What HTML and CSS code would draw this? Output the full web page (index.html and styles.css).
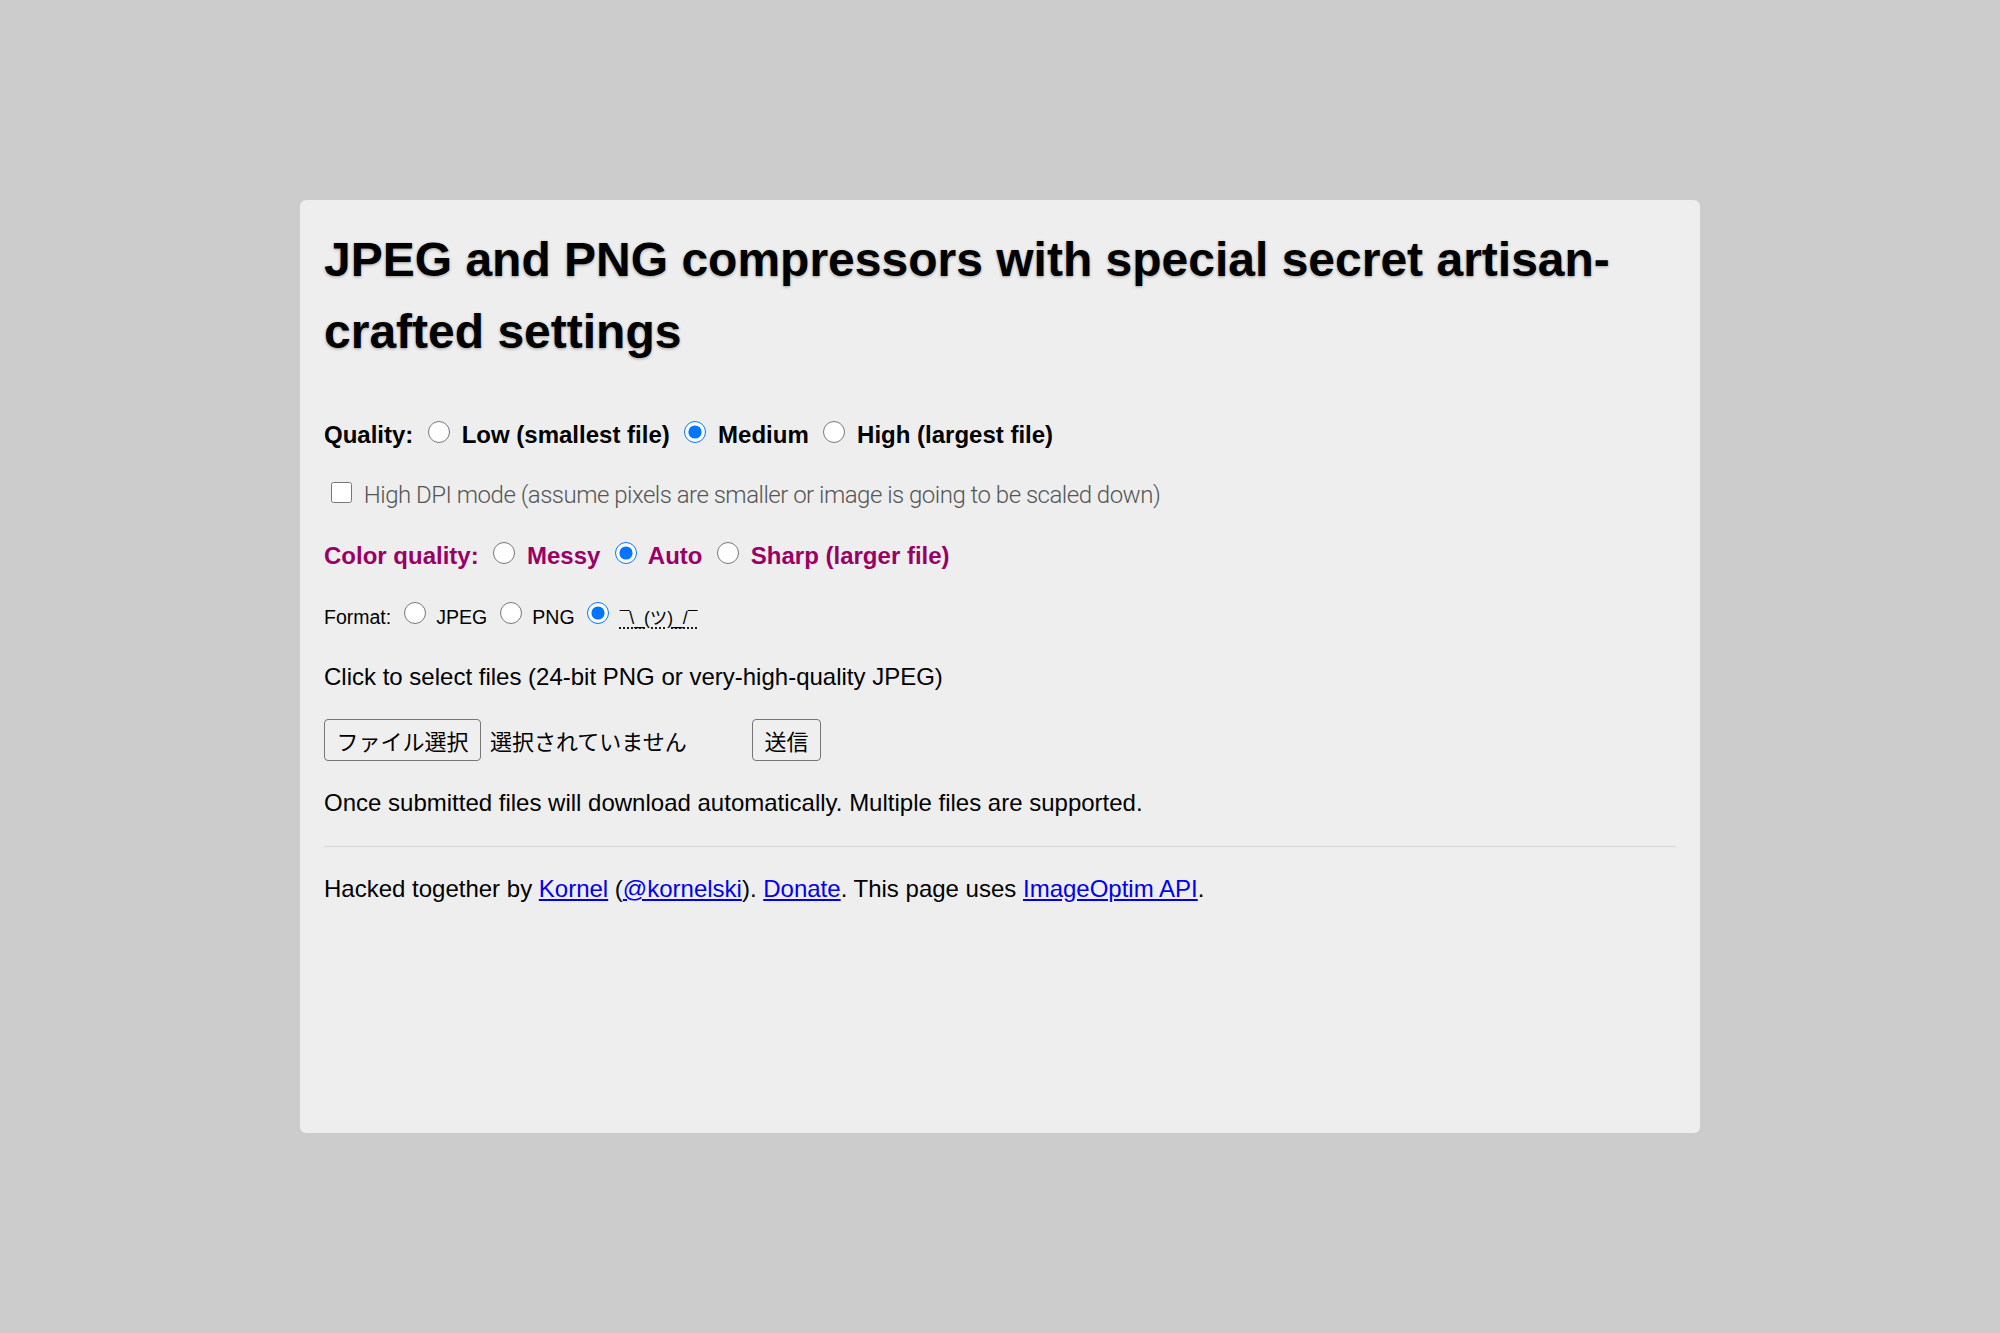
FILE: index.html
```html
<!DOCTYPE html>
<html lang="en">
<head>
<meta charset="utf-8">
<title>JPEG and PNG compressors</title>
<link rel="stylesheet" href="styles.css">
</head>
<body>
<main class="card">
  <h1 class="title">JPEG and PNG compressors with special secret artisan-crafted settings</h1>
  <form class="form">
    <div class="row quality"><span class="label">Quality:</span> <label class="opt"><input class="radio" type="radio" name="q"> Low (smallest file)</label> <label class="opt"><input class="radio" type="radio" name="q" checked> Medium</label> <label class="opt"><input class="radio" type="radio" name="q"> High (largest file)</label></div>
    <div class="row hidpi"><label class="opt-light"><input class="check" type="checkbox"> High DPI mode (assume pixels are smaller or image is going to be scaled down)</label></div>
    <div class="row color"><span class="label">Color quality:</span> <label class="opt"><input class="radio" type="radio" name="c"> Messy</label> <label class="opt"><input class="radio" type="radio" name="c" checked> Auto</label> <label class="opt"><input class="radio" type="radio" name="c"> Sharp (larger file)</label></div>
    <div class="row format"><span class="small">Format:</span> <label class="small"><input class="radio" type="radio" name="f"> JPEG</label> <label class="small"><input class="radio" type="radio" name="f"> PNG</label> <label class="small"><input class="radio" type="radio" name="f" checked> <abbr class="shrug" title="Automatic">¯\_(ツ)_/¯</abbr></label></div>
    <div class="row">Click to select files (24-bit PNG or very-high-quality JPEG)</div>
    <div class="files">
      <div class="file-widget"><button type="button" class="btn">ファイル選択</button><span class="file-name">選択されていません</span></div>
      <button type="button" class="btn submit">送信</button>
    </div>
    <div class="row">Once submitted files will download automatically. Multiple files are supported.</div>
  </form>
  <hr class="rule">
  <div class="row footer">Hacked together by <a href="#">Kornel</a> (<a href="#">@kornelski</a>). <a href="#">Donate</a>. This page uses <a href="#">ImageOptim API</a>.</div>
</main>
</body>
</html>
```
FILE: styles.css
```css
html, body {
  margin: 0;
  padding: 0;
}
body {
  background: #cccccc;
  font-family: "Liberation Sans", Arial, "Noto Sans CJK JP", sans-serif;
  color: #000;
}
.card {
  box-sizing: border-box;
  width: 1400px;
  height: 933px;
  margin: 200px auto 0;
  padding: 24px;
  background: #eeeeee;
  border-radius: 6px;
}
.title {
  margin: 0 0 48.7px;
  font-size: 48px;
  line-height: 72px;
  font-weight: 700;
  text-shadow: 0 1px 3px rgba(0, 0, 0, 0.35);
}
.form {
  margin: 0;
}
.row {
  margin: 0 0 24px;
  font-size: 24px;
  line-height: 36.5px;
}
.label, .opt {
  font-weight: 700;
}
.color {
  color: #990066;
}
.radio {
  width: 22px;
  height: 22px;
  margin: 2px 5.5px 0 7.5px;
  vertical-align: baseline;
}
.format .radio {
  margin-left: 6px;
  margin-right: 5px;
}
.check {
  width: 21px;
  height: 21px;
  margin: 2px 6.5px 0 7px;
  vertical-align: baseline;
}
.opt-light {
  font-family: Roboto, "Liberation Sans", sans-serif;
  font-weight: 300;
  color: #555555;
  letter-spacing: -0.5px;
}
.small {
  font-size: 19.5px;
  line-height: 22px;
}
.shrug {
  font-family: "Liberation Sans", "Noto Sans CJK JP", sans-serif;
  font-size: 17.5px;
  text-decoration: underline dotted;
  text-underline-offset: 3px;
}
.files {
  display: flex;
  align-items: center;
  height: 42px;
  margin: 0 0 24px;
}
.file-widget {
  display: flex;
  align-items: center;
  width: 422px;
}
.btn {
  box-sizing: border-box;
  height: 42px;
  padding: 0 11.5px;
  border: 1px solid #767676;
  border-radius: 4px;
  background: #efefef;
  color: #000;
  font-family: "Noto Sans CJK JP", sans-serif;
  font-size: 22px;
  line-height: 40px;
}
.file-name {
  margin-left: 9px;
  font-family: "Noto Sans CJK JP", sans-serif;
  font-size: 22px;
  white-space: nowrap;
}
.submit {
  margin-left: 6px;
  padding: 0 11.5px;
}
.rule {
  margin: 0 0 24px;
  border: 0;
  border-top: 1px solid #d6d6d6;
  height: 0;
}
.footer a {
  color: #0000ee;
}
```
